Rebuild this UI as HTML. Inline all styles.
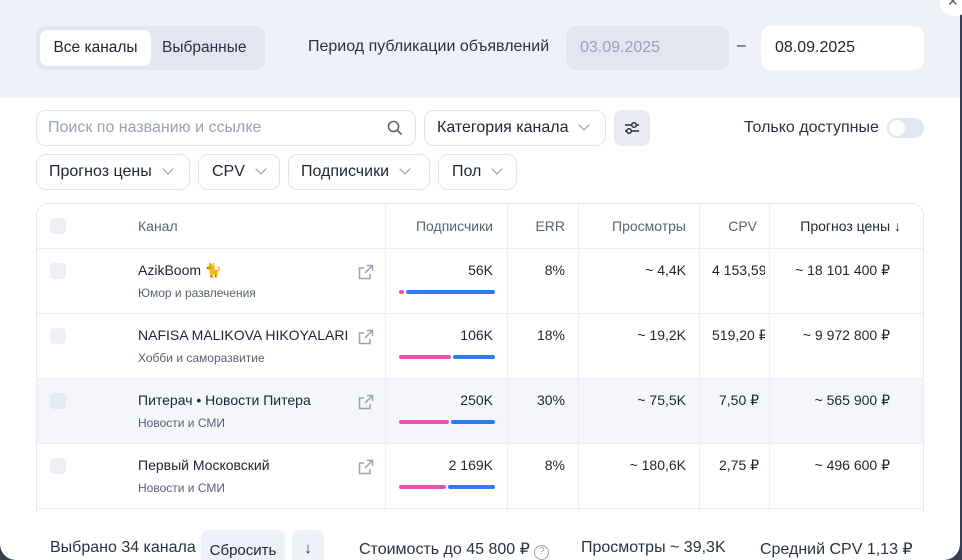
<!DOCTYPE html>
<html><head><meta charset="utf-8"><style>
*{box-sizing:border-box;margin:0;padding:0}
body{width:962px;height:548px;overflow:hidden;background:#3a3f52;font-family:"Liberation Sans","DejaVu Sans",sans-serif;color:#1f2437;position:relative}
.modal{position:absolute;left:0;top:-20px;width:960px;height:580px;background:#fff;border-radius:16px;overflow:hidden}
.head{position:absolute;left:0;top:0;width:960px;height:118px;background:#eef1f8}
.abs{position:absolute}
.seg{left:36px;top:46px;width:229px;height:44px;background:#e1e6f0;border-radius:10px}
.seg .on{position:absolute;left:4px;top:4px;width:111px;height:36px;background:#fff;border-radius:8px;font-size:15.5px;line-height:36px;text-align:center}
.seg .off{position:absolute;left:126px;top:4px;font-size:15.5px;line-height:36px;color:#2b3145}
.lbl{font-size:16px;color:#2b3145}
.date{height:44px;border-radius:10px;font-size:16px;line-height:44px;padding-left:14px}
.inp{height:36px;border:1px solid #e0e4ed;border-radius:10px;font-size:16px;line-height:34px;background:#fff}
.chev{display:inline-block;width:8px;height:8px;border-right:1.5px solid #8a91a6;border-bottom:1.5px solid #8a91a6;transform:rotate(45deg);margin-left:12px;position:relative;top:-3px}
.card{position:absolute;left:36px;top:223px;width:888px;height:360px;border:1px solid #e6e9f1;border-radius:12px;overflow:hidden}
.vl{position:absolute;top:0;width:1px;height:310px;background:#eceef4}
.hl{position:absolute;left:0;width:888px;height:1px;background:#eceef4}
.cb{position:absolute;left:13px;width:16px;height:16px;border-radius:4px;background:#eef0f5}
.t{position:absolute;font-size:14px;white-space:nowrap}
.h{position:absolute;font-size:14px;color:#5a6175;top:14px}
.sub{position:absolute;font-size:12px;color:#5a6175;white-space:nowrap}
.r{text-align:right}
.bar{position:absolute;height:4px;border-radius:2px}
.pk{background:#f24fae}.bl{background:#2d7cf0}
.ext{position:absolute;left:321px}
</style></head><body>
<div class="modal">
<div class="head"></div>
<div class="abs seg"><div class="on">Все каналы</div><div class="off">Выбранные</div></div>
<div class="abs lbl" style="left:308px;top:58px">Период публикации объявлений</div>
<div class="abs date" style="left:566px;top:46px;width:163px;background:#e1e6f0;color:#9aa1b3">03.09.2025</div>
<div class="abs lbl" style="left:737px;top:57px">–</div>
<div class="abs date" style="left:761px;top:46px;width:163px;background:#fff;padding-left:14px">08.09.2025</div>

<div class="abs inp" style="left:36px;top:130px;width:380px;padding-left:11px;color:#9aa1b3">Поиск по названию и ссылке
<svg style="position:absolute;right:12px;top:9px" width="16" height="16" viewBox="0 0 16 16"><circle cx="6.5" cy="6.5" r="5" fill="none" stroke="#5a6175" stroke-width="1.6"/><path d="M10.3 10.3L14.5 14.5" stroke="#5a6175" stroke-width="1.6"/></svg></div>
<div class="abs inp" style="left:424px;top:130px;width:182px;padding-left:12px">Категория канала<span class="chev"></span></div>
<div class="abs" style="left:614px;top:130px;width:36px;height:36px;background:#e8ebf3;border-radius:8px">
<svg width="36" height="36" viewBox="0 0 36 36"><path d="M11 15h14M11 21h14" stroke="#2b3145" stroke-width="1.5"/><circle cx="20" cy="15" r="2.3" fill="#e8ebf3" stroke="#2b3145" stroke-width="1.5"/><circle cx="15" cy="21" r="2.3" fill="#e8ebf3" stroke="#2b3145" stroke-width="1.5"/></svg></div>
<div class="abs lbl" style="left:744px;top:139px">Только доступные</div>
<div class="abs" style="left:887px;top:138px;width:37px;height:20px;background:#e1e6f0;border-radius:10px"><div style="position:absolute;left:2px;top:2px;width:16px;height:16px;border-radius:50%;background:#fff"></div></div>

<div class="abs inp" style="left:36px;top:174px;width:154px;padding-left:12px">Прогноз цены<span class="chev"></span></div>
<div class="abs inp" style="left:198px;top:174px;width:82px;padding-left:13px">CPV<span class="chev"></span></div>
<div class="abs inp" style="left:288px;top:174px;width:142px;padding-left:12px">Подписчики<span class="chev"></span></div>
<div class="abs inp" style="left:438px;top:174px;width:79px;padding-left:13px">Пол<span class="chev"></span></div>

<div class="card">
<div style="position:absolute;left:0;top:174px;width:888px;height:65px;background:#f4f6fa"></div>
<div class="vl" style="left:348px"></div><div class="vl" style="left:470px"></div><div class="vl" style="left:541px"></div><div class="vl" style="left:662px"></div><div class="vl" style="left:732px"></div>
<div class="hl" style="top:44px"></div><div class="hl" style="top:109px"></div><div class="hl" style="top:174px"></div><div class="hl" style="top:239px"></div><div class="hl" style="top:304px"></div><div class="hl" style="top:310px"></div>
<div class="cb" style="top:14px"></div>
<div class="h" style="left:101px">Канал</div>
<div class="h r" style="right:430px">Подписчики</div>
<div class="h r" style="right:358px">ERR</div>
<div class="h r" style="right:237px">Просмотры</div>
<div class="h r" style="right:166px">CPV</div>
<div class="h r" style="right:22px;color:#1f2437">Прогноз цены ↓</div>

<div class="cb" style="top:59px"></div>
<div class="t" style="left:101px;top:58px">AzikBoom 🐈</div><div class="sub" style="left:101px;top:82px">Юмор и развлечения</div>
<svg class="ext" style="top:60px" width="16" height="16" viewBox="0 0 16 16"><path d="M9 1.5H14.5V7M14.5 1.5L7 9M12 10v4.5H1.5V4H6" fill="none" stroke="#9aa1b3" stroke-width="1.5"/></svg>
<div class="t" style="right:430px;top:58px">56K</div><div class="bar pk" style="left:362px;top:86px;width:5px"></div><div class="bar bl" style="left:369px;top:86px;width:89px"></div>
<div class="t" style="right:358px;top:58px">8%</div><div class="t" style="right:237px;top:58px">~ 4,4K</div><div class="t" style="left:675px;top:58px;width:53px;overflow:hidden">4 153,59</div><div class="t" style="right:33px;top:58px">~ 18 101 400 ₽</div>

<div class="cb" style="top:124px"></div>
<div class="t" style="left:101px;top:123px">NAFISA MALIKOVA HIKOYALARI</div><div class="sub" style="left:101px;top:147px">Хобби и саморазвитие</div>
<svg class="ext" style="top:125px" width="16" height="16" viewBox="0 0 16 16"><path d="M9 1.5H14.5V7M14.5 1.5L7 9M12 10v4.5H1.5V4H6" fill="none" stroke="#9aa1b3" stroke-width="1.5"/></svg>
<div class="t" style="right:430px;top:123px">106K</div><div class="bar pk" style="left:362px;top:151px;width:52px"></div><div class="bar bl" style="left:416px;top:151px;width:42px"></div>
<div class="t" style="right:358px;top:123px">18%</div><div class="t" style="right:237px;top:123px">~ 19,2K</div><div class="t" style="left:675px;top:123px;width:53px;overflow:hidden">519,20 ₽</div><div class="t" style="right:33px;top:123px">~ 9 972 800 ₽</div>

<div class="cb" style="top:189px;background:#e6e9f1"></div>
<div class="t" style="left:101px;top:188px">Питерач • Новости Питера</div><div class="sub" style="left:101px;top:212px">Новости и СМИ</div>
<svg class="ext" style="top:190px" width="16" height="16" viewBox="0 0 16 16"><path d="M9 1.5H14.5V7M14.5 1.5L7 9M12 10v4.5H1.5V4H6" fill="none" stroke="#9aa1b3" stroke-width="1.5"/></svg>
<div class="t" style="right:430px;top:188px">250K</div><div class="bar pk" style="left:362px;top:216px;width:50px"></div><div class="bar bl" style="left:414px;top:216px;width:44px"></div>
<div class="t" style="right:358px;top:188px">30%</div><div class="t" style="right:237px;top:188px">~ 75,5K</div><div class="t" style="left:682px;top:188px">7,50 ₽</div><div class="t" style="right:33px;top:188px">~ 565 900 ₽</div>

<div class="cb" style="top:254px"></div>
<div class="t" style="left:101px;top:253px">Первый Московский</div><div class="sub" style="left:101px;top:277px">Новости и СМИ</div>
<svg class="ext" style="top:255px" width="16" height="16" viewBox="0 0 16 16"><path d="M9 1.5H14.5V7M14.5 1.5L7 9M12 10v4.5H1.5V4H6" fill="none" stroke="#9aa1b3" stroke-width="1.5"/></svg>
<div class="t" style="right:430px;top:253px">2 169K</div><div class="bar pk" style="left:362px;top:281px;width:47px"></div><div class="bar bl" style="left:411px;top:281px;width:47px"></div>
<div class="t" style="right:358px;top:253px">8%</div><div class="t" style="right:237px;top:253px">~ 180,6K</div><div class="t" style="left:682px;top:253px">2,75 ₽</div><div class="t" style="right:33px;top:253px">~ 496 600 ₽</div>
</div>

<div class="abs" style="left:36px;top:533px;width:888px;height:50px;background:#fff"></div>
<div class="abs lbl" style="left:50px;top:559px">Выбрано 34 канала</div>
<div class="abs" style="left:201px;top:550px;width:84px;height:36px;background:#eef1f8;border-radius:8px;font-size:15px;line-height:42px;text-align:center">Сбросить</div>
<div class="abs" style="left:292px;top:550px;width:32px;height:36px;background:#eef1f8;border-radius:8px;font-size:15px;line-height:38px;text-align:center">↓</div>
<div class="abs lbl" style="left:359px;top:559px">Стоимость до 45 800 ₽ <span style="display:inline-block;width:15px;height:15px;border:1.5px solid #9aa1b3;border-radius:50%;font-size:10px;line-height:12px;text-align:center;color:#9aa1b3">?</span></div>
<div class="abs lbl" style="left:581px;top:559px">Просмотры ~ 39,3K</div>
<div class="abs lbl" style="left:760px;top:559px">Средний CPV 1,13 ₽</div>
</div>
<div class="abs" style="left:940px;top:-10px;width:30px;height:26px;border-radius:50%;background:#fff;font-size:14px;color:#5a6175;padding-left:7px;line-height:22px">✕</div>
</body></html>
